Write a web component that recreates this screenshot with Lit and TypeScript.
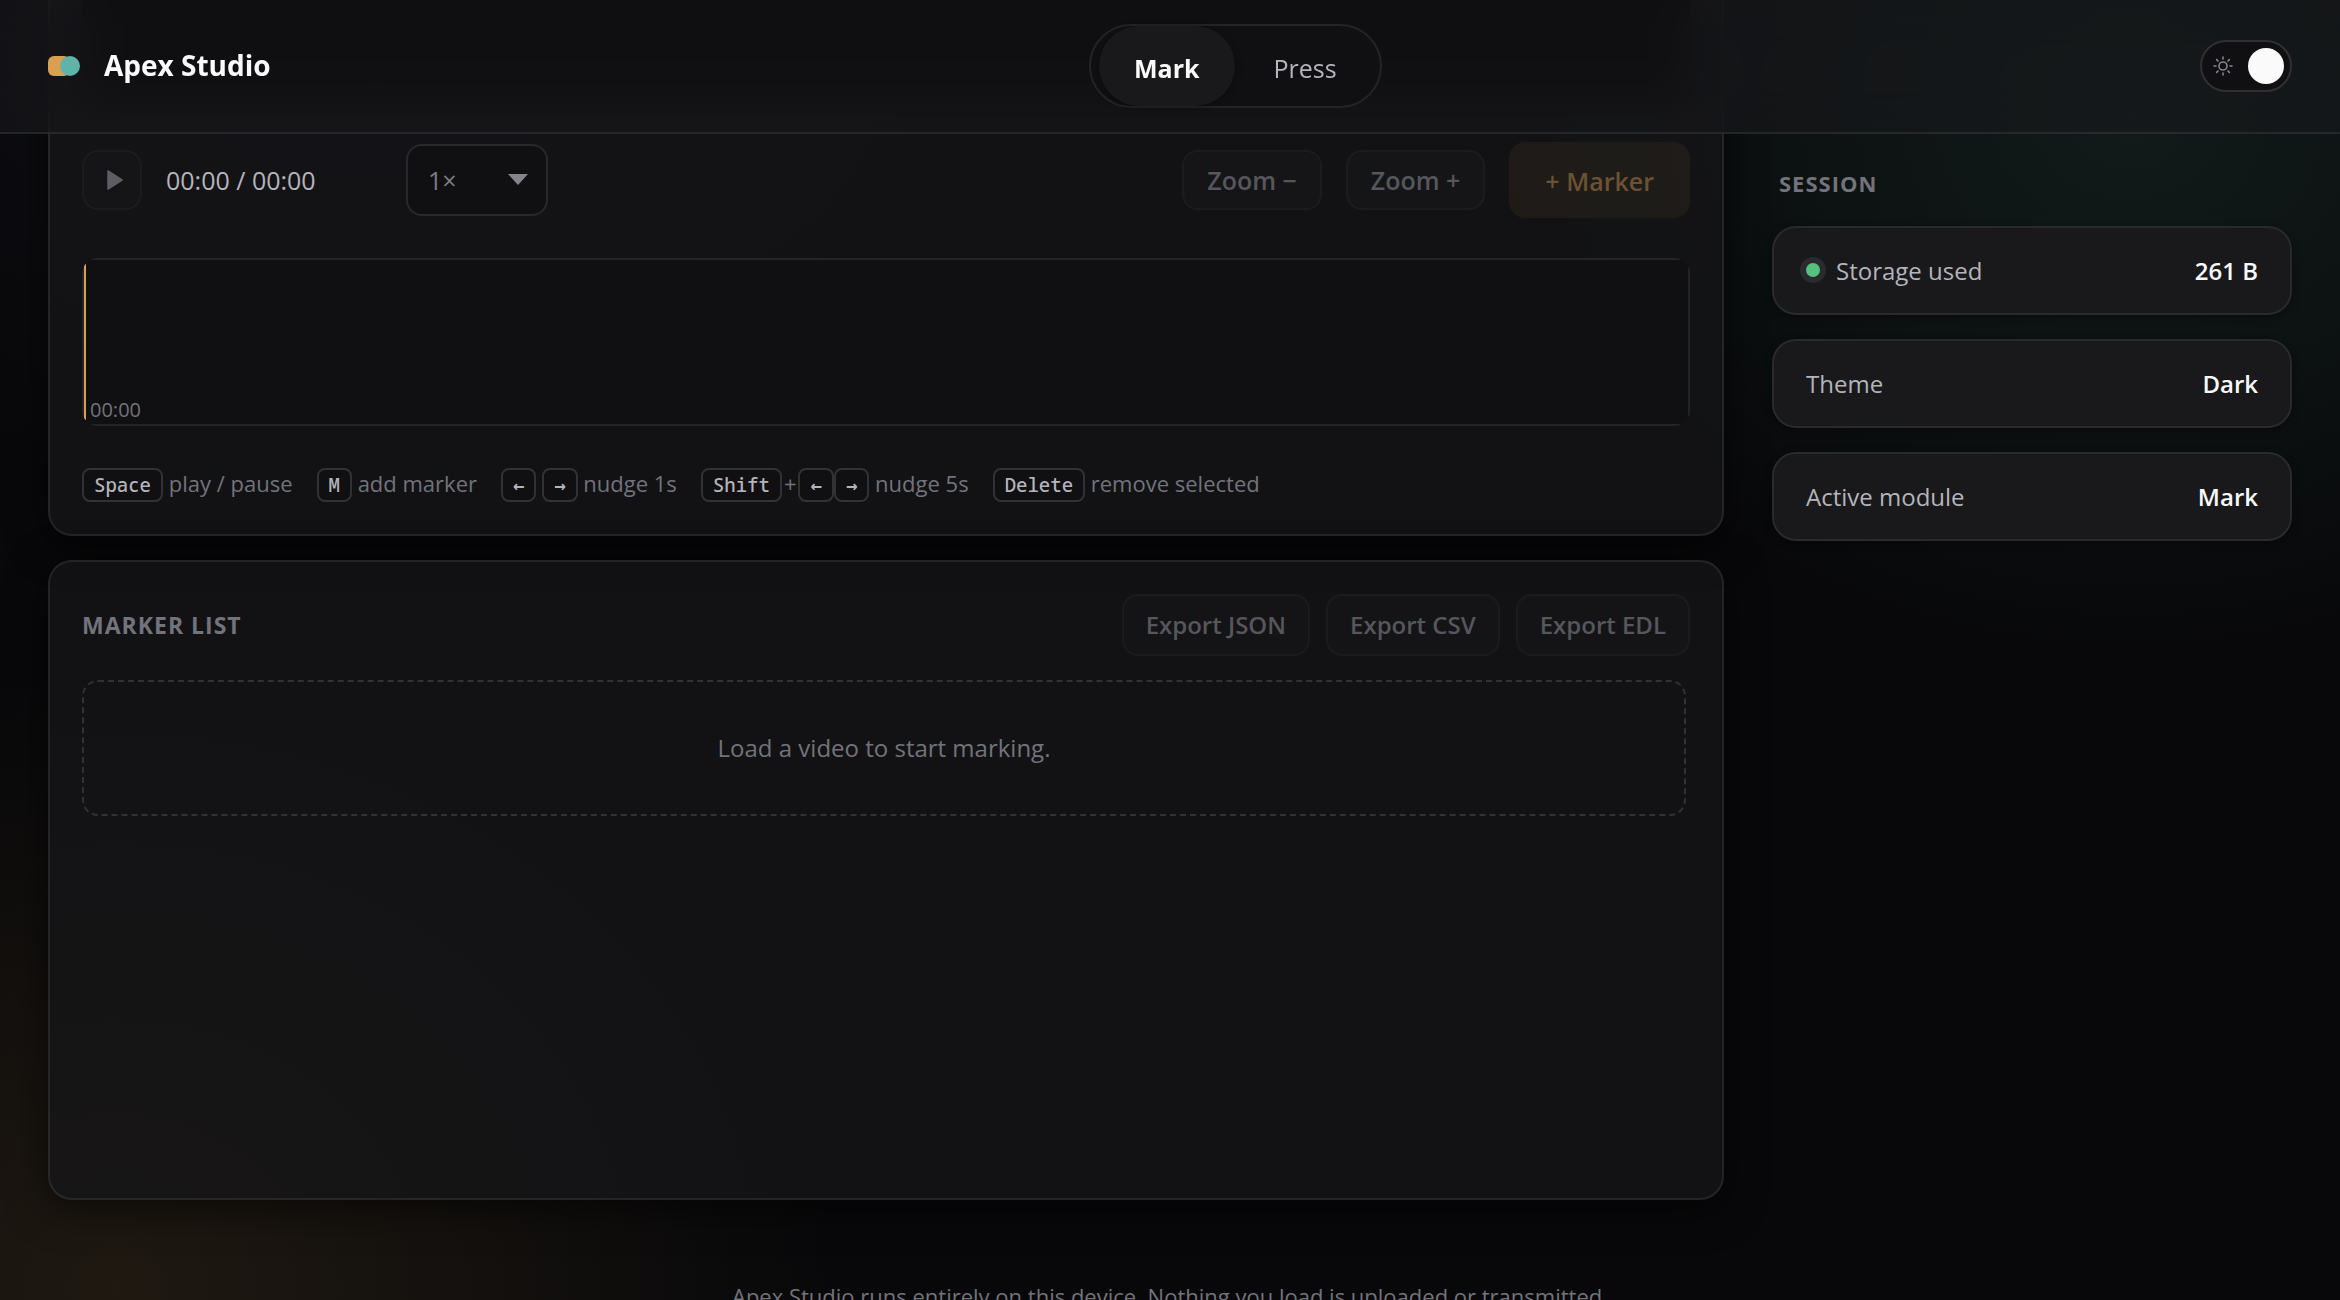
import { LitElement, html, css, svg } from "lit";
import { customElement, property, state } from "lit/decorators.js";

const tokens = css`
  :host {
    --text: #fafafa;
    --text-2: #b4b4bb;
    --text-3: #73737b;
    --text-off: #56565c;
    --line: #242427;
    --line-strong: #323235;
    --well: #101012;
    --card: #19191b;
    --accent: #d8a04f;
    --mono: "Noto Sans Mono", "DejaVu Sans Mono", monospace;
  }
  *,
  *::before,
  *::after {
    box-sizing: border-box;
  }
  button,
  select {
    font: inherit;
    color: inherit;
    margin: 0;
  }
`;

type Module = "Mark" | "Press";

@customElement("studio-header")
export class StudioHeader extends LitElement {
  @property() active: Module = "Mark";

  static styles = [
    tokens,
    css`
      .bar {
        display: flex;
        align-items: center;
        justify-content: space-between;
        height: 134px;
        padding: 0 48px;
        border-bottom: 2px solid rgba(255, 255, 255, 0.08);
        background: rgba(24, 24, 27, 0.62);
        backdrop-filter: blur(24px);
      }
      .brand {
        display: flex;
        align-items: center;
        gap: 24px;
        color: var(--text);
        font-size: 28px;
        font-weight: 700;
        line-height: 36px;
        text-decoration: none;
      }
      .brand span {
        padding-bottom: 2px;
      }
      .logo {
        width: 32px;
        height: 20px;
        display: block;
      }
      .tabs {
        display: flex;
        gap: 4px;
        height: 84px;
        padding: 0 8px;
        border: 2px solid var(--line);
        border-radius: 42px;
        background: var(--well);
      }
      .tab {
        padding: 4px 35px 0;
        border: 0;
        border-radius: 40px;
        background: none;
        color: var(--text-2);
        font-size: 25px;
        font-weight: 500;
      }
      .tab.on {
        background: var(--card);
        color: var(--text);
        font-weight: 700;
        box-shadow: 0 2px 8px rgba(0, 0, 0, 0.3);
      }
      .switch {
        display: flex;
        align-items: center;
        justify-content: space-between;
        width: 92px;
        height: 52px;
        padding: 0 6px 0 11px;
        border: 2px solid #303033;
        border-radius: 26px;
        background: var(--well);
      }
      .sun {
        width: 20px;
        height: 20px;
      }
      .knob {
        width: 36px;
        height: 36px;
        border-radius: 50%;
        background: var(--text);
      }
    `,
  ];

  private pick(name: Module) {
    this.dispatchEvent(new CustomEvent("module-change", { detail: name }));
  }

  render() {
    const rays = [0, 45, 90, 135, 180, 225, 270, 315];
    return html`
      <header class="bar">
        <a class="brand" href="#">
          <svg class="logo" viewBox="0 0 32 20" aria-hidden="true">
            <rect width="22" height="20" rx="6" fill="#d8a04f" />
            <circle cx="22" cy="10" r="10" fill="#5fb3a8" />
          </svg>
          <span>Apex Studio</span>
        </a>
        <nav class="tabs" aria-label="Modules">
          ${(["Mark", "Press"] as Module[]).map(
            (name) => html`<button
              class="tab ${name === this.active ? "on" : ""}"
              aria-pressed=${name === this.active}
              @click=${() => this.pick(name)}
            >
              ${name}
            </button>`
          )}
        </nav>
        <button class="switch" role="switch" aria-checked="true" aria-label="Dark theme">
          <svg class="sun" viewBox="0 0 20 20" fill="none" stroke="#85858c" stroke-width="1.6" stroke-linecap="round" aria-hidden="true">
            <circle cx="10" cy="10" r="4" />
            ${rays.map((a) => svg`<path d="M10 3V1" transform="rotate(${a} 10 10)" />`)}
          </svg>
          <span class="knob"></span>
        </button>
      </header>
    `;
  }
}

@customElement("mark-player")
export class MarkPlayer extends LitElement {
  static styles = [
    tokens,
    css`
      .panel {
        display: flex;
        flex-direction: column;
        gap: 40px;
        padding: 0 32px 32px;
        border: 2px solid rgba(255, 255, 255, 0.08);
        border-top: 0;
        border-radius: 0 0 24px 24px;
        background: rgba(22, 22, 25, 0.72);
        box-shadow: 0 8px 40px rgba(0, 0, 0, 0.6);
      }
      .video {
        height: 102px;
        background: #020203;
      }
      .controls {
        display: flex;
        align-items: center;
        gap: 24px;
        height: 76px;
      }
      .btn {
        height: 60px;
        padding: 0 23px;
        border: 2px solid #1c1c1f;
        border-radius: 16px;
        background: #151517;
        color: var(--text-off);
        font-size: 25px;
        font-weight: 600;
      }
      .play {
        display: grid;
        place-items: center;
        width: 60px;
        padding: 0 0 0 6px;
      }
      .play svg {
        width: 16px;
        height: 20px;
      }
      .btn.primary {
        height: 76px;
        padding: 2px 36px 0;
        border: 0;
        background: rgba(216, 160, 79, 0.065);
        color: #6b5233;
      }
      .time {
        min-width: 216px;
        color: var(--text-2);
        font-size: 25px;
      }
      .rate {
        display: grid;
        align-items: center;
        margin-right: auto;
      }
      .rate select,
      .rate svg {
        grid-area: 1 / 1;
      }
      .rate select {
        appearance: none;
        width: 142px;
        height: 72px;
        padding: 0 20px;
        border: 2px solid #29292c;
        border-radius: 16px;
        background: var(--well);
        color: #7c7c84;
        font-size: 25px;
      }
      .rate svg {
        justify-self: end;
        width: 20px;
        height: 12px;
        margin-right: 20px;
        pointer-events: none;
      }
      .timeline {
        position: relative;
        height: 168px;
        border-radius: 16px;
        overflow: hidden;
        background:
          linear-gradient(var(--line), var(--line)) 50% 0 / calc(100% - 18px) 2px no-repeat,
          linear-gradient(var(--line), var(--line)) 50% 100% / calc(100% - 18px) 2px no-repeat,
          linear-gradient(var(--line), var(--line)) 0 50% / 2px calc(100% - 18px) no-repeat,
          linear-gradient(var(--line), var(--line)) 100% 50% / 2px calc(100% - 18px) no-repeat,
          var(--well);
      }
      .playhead {
        position: absolute;
        left: 2px;
        top: 6px;
        bottom: 6px;
        width: 2px;
        background: var(--accent);
      }
      .tick {
        position: absolute;
        left: 8px;
        bottom: 2px;
        color: var(--text-3);
        font-size: 20px;
        line-height: 28px;
      }
      .hints {
        display: flex;
        flex-wrap: wrap;
        gap: 24px;
        height: 36px;
        color: var(--text-3);
        font-size: 22px;
        line-height: 34px;
      }
      kbd {
        display: inline-block;
        padding: 0 10px;
        border: 2px solid var(--line-strong);
        border-radius: 8px;
        background: var(--well);
        color: var(--text-2);
        font: 500 19px/30px var(--mono);
      }
      kbd.arrow {
        font-family: "DejaVu Sans Mono", monospace;
        font-weight: 700;
      }
      .plus {
        padding: 0 2px;
      }
    `,
  ];

  render() {
    const left = html`<kbd class="arrow">←</kbd>`;
    const right = html`<kbd class="arrow">→</kbd>`;
    return html`
      <section class="panel" aria-label="Player">
        <div class="video"></div>
        <div class="controls">
          <button class="btn play" aria-label="Play" disabled>
            <svg viewBox="0 0 16 20" aria-hidden="true">
              <path d="M1 1 15 10 1 19Z" fill="#5e5e64" stroke="#5e5e64" stroke-width="1.5" stroke-linejoin="round" />
            </svg>
          </button>
          <span class="time">00:00 / 00:00</span>
          <label class="rate">
            <select aria-label="Playback rate">
              <option>1×</option>
            </select>
            <svg viewBox="0 0 20 12" aria-hidden="true"><path d="M0 0H20L10 11Z" fill="#85858d" /></svg>
          </label>
          <button class="btn" disabled>Zoom −</button>
          <button class="btn" disabled>Zoom +</button>
          <button class="btn primary" disabled>+ Marker</button>
        </div>
        <div class="timeline">
          <span class="playhead"></span>
          <span class="tick">00:00</span>
        </div>
        <div class="hints">
          <span><kbd>Space</kbd> play / pause</span>
          <span><kbd>M</kbd> add marker</span>
          <span>${left} ${right} nudge 1s</span>
          <span><kbd>Shift</kbd><span class="plus">+</span>${left}${right} nudge 5s</span>
          <span><kbd>Delete</kbd> remove selected</span>
        </div>
      </section>
    `;
  }
}

@customElement("marker-list")
export class MarkerList extends LitElement {
  static styles = [
    tokens,
    css`
      .panel {
        display: flex;
        flex-direction: column;
        gap: 24px;
        min-height: 640px;
        padding: 32px;
        border: 2px solid rgba(255, 255, 255, 0.08);
        border-radius: 24px;
        background: rgba(22, 22, 25, 0.72);
        box-shadow: 0 8px 40px rgba(0, 0, 0, 0.6);
      }
      .head {
        display: flex;
        align-items: center;
        gap: 16px;
      }
      h2 {
        margin: 0 auto 0 0;
        color: var(--text-3);
        font-size: 23px;
        font-weight: 700;
        letter-spacing: 1px;
        line-height: 34px;
        text-transform: uppercase;
      }
      button {
        height: 62px;
        padding: 0 22px 2px;
        border: 2px solid #1b1b1e;
        border-radius: 16px;
        background: #141416;
        color: var(--text-off);
        font-size: 24px;
        font-weight: 600;
      }
      .empty {
        margin: 0 4px 0 0;
        padding: 48px;
        border: 2px dashed var(--line-strong);
        border-radius: 16px;
        color: var(--text-3);
        font-size: 24px;
        line-height: 36px;
        text-align: center;
      }
    `,
  ];

  render() {
    return html`
      <section class="panel">
        <div class="head">
          <h2>Marker list</h2>
          ${["JSON", "CSV", "EDL"].map((f) => html`<button disabled>Export ${f}</button>`)}
        </div>
        <p class="empty">Load a video to start marking.</p>
      </section>
    `;
  }
}

@customElement("session-panel")
export class SessionPanel extends LitElement {
  @property() module: Module = "Mark";

  static styles = [
    tokens,
    css`
      aside {
        padding-top: 166px;
      }
      h2 {
        margin: 0 0 26px;
        padding-left: 7px;
        color: var(--text-3);
        font-size: 22px;
        font-weight: 700;
        letter-spacing: 1px;
        line-height: 34px;
        text-transform: uppercase;
      }
      dl {
        display: grid;
        gap: 24px;
        margin: 0;
      }
      .card {
        display: flex;
        justify-content: space-between;
        padding: 26px 32px;
        border: 2px solid #2a2a2d;
        border-radius: 24px;
        background: var(--card);
        box-shadow: 0 2px 8px rgba(0, 0, 0, 0.4);
        font-size: 24px;
        line-height: 33px;
      }
      dt {
        display: flex;
        align-items: center;
        gap: 16px;
        color: var(--text-2);
      }
      dd {
        margin: 0;
        color: var(--text);
        font-weight: 600;
      }
      .dot {
        width: 14px;
        height: 14px;
        margin-bottom: 2px;
        border-radius: 50%;
        background: #56c07f;
        box-shadow: 0 0 0 6px #292b2f;
      }
    `,
  ];

  render() {
    const rows: [string, string][] = [
      ["Storage used", "261 B"],
      ["Theme", "Dark"],
      ["Active module", this.module],
    ];
    return html`
      <aside>
        <h2>Session</h2>
        <dl>
          ${rows.map(
            ([k, v], i) => html`<div class="card">
              <dt>${i === 0 ? html`<span class="dot"></span>` : ""}${k}</dt>
              <dd>${v}</dd>
            </div>`
          )}
        </dl>
      </aside>
    `;
  }
}

@customElement("app-root")
export class AppRoot extends LitElement {
  @state() private module: Module = "Mark";

  static styles = [
    tokens,
    css`
      :host {
        display: block;
        height: 100vh;
        overflow: hidden;
        color: var(--text);
        font-family: "Open Sans", "Noto Sans", sans-serif;
        background:
          radial-gradient(640px 540px at 91% 9%, rgba(95, 185, 155, 0.11), transparent),
          radial-gradient(800px 440px at 16% 6%, rgba(110, 125, 175, 0.06), transparent),
          radial-gradient(720px 620px at 5% 99%, rgba(216, 160, 79, 0.11), transparent),
          #08080a;
      }
      .top {
        display: block;
        position: sticky;
        top: 0;
        z-index: 2;
      }
      .layout {
        display: grid;
        grid-template-columns: minmax(0, 1fr) 520px;
        gap: 48px;
        margin-top: -134px;
        padding: 0 48px;
      }
      .stack {
        display: grid;
        gap: 24px;
      }
      footer {
        padding: 80px 48px;
        color: var(--text-3);
        font-size: 22px;
        line-height: 33px;
        text-align: center;
      }
    `,
  ];

  render() {
    return html`
      <studio-header
        class="top"
        .active=${this.module}
        @module-change=${(e: CustomEvent<Module>) => (this.module = e.detail)}
      ></studio-header>
      <main class="layout">
        <div class="stack">
          <mark-player></mark-player>
          <marker-list></marker-list>
        </div>
        <session-panel .module=${this.module}></session-panel>
      </main>
      <footer>Apex Studio runs entirely on this device. Nothing you load is uploaded or transmitted.</footer>
    `;
  }
}
